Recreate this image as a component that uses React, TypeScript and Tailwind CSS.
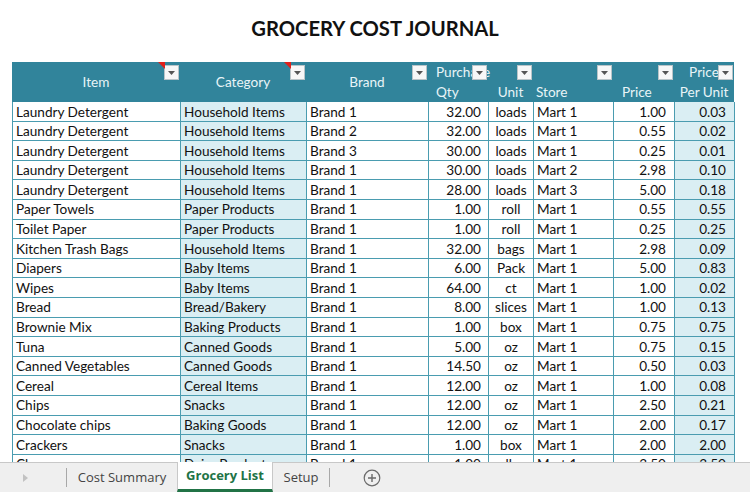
import React from "react";

const rows: string[][] = [
  ["Laundry Detergent", "Household Items", "Brand 1", "32.00", "loads", "Mart 1", "1.00", "0.03"],
  ["Laundry Detergent", "Household Items", "Brand 2", "32.00", "loads", "Mart 1", "0.55", "0.02"],
  ["Laundry Detergent", "Household Items", "Brand 3", "30.00", "loads", "Mart 1", "0.25", "0.01"],
  ["Laundry Detergent", "Household Items", "Brand 1", "30.00", "loads", "Mart 2", "2.98", "0.10"],
  ["Laundry Detergent", "Household Items", "Brand 1", "28.00", "loads", "Mart 3", "5.00", "0.18"],
  ["Paper Towels", "Paper Products", "Brand 1", "1.00", "roll", "Mart 1", "0.55", "0.55"],
  ["Toilet Paper", "Paper Products", "Brand 1", "1.00", "roll", "Mart 1", "0.25", "0.25"],
  ["Kitchen Trash Bags", "Household Items", "Brand 1", "32.00", "bags", "Mart 1", "2.98", "0.09"],
  ["Diapers", "Baby Items", "Brand 1", "6.00", "Pack", "Mart 1", "5.00", "0.83"],
  ["Wipes", "Baby Items", "Brand 1", "64.00", "ct", "Mart 1", "1.00", "0.02"],
  ["Bread", "Bread/Bakery", "Brand 1", "8.00", "slices", "Mart 1", "1.00", "0.13"],
  ["Brownie Mix", "Baking Products", "Brand 1", "1.00", "box", "Mart 1", "0.75", "0.75"],
  ["Tuna", "Canned Goods", "Brand 1", "5.00", "oz", "Mart 1", "0.75", "0.15"],
  ["Canned Vegetables", "Canned Goods", "Brand 1", "14.50", "oz", "Mart 1", "0.50", "0.03"],
  ["Cereal", "Cereal Items", "Brand 1", "12.00", "oz", "Mart 1", "1.00", "0.08"],
  ["Chips", "Snacks", "Brand 1", "12.00", "oz", "Mart 1", "2.50", "0.21"],
  ["Chocolate chips", "Baking Goods", "Brand 1", "12.00", "oz", "Mart 1", "2.00", "0.17"],
  ["Crackers", "Snacks", "Brand 1", "1.00", "box", "Mart 1", "2.00", "2.00"],
  ["Cheese", "Dairy Products", "Brand 1", "1.00", "lb", "Mart 1", "3.50", "3.50"],
];

// per-column cell styling (alignment, padding, shading)
const cellCls = [
  "pl-[3px]",
  "pl-[3px] bg-[#daeef3]",
  "pl-[3px]",
  "justify-end pr-[7px]",
  "justify-center",
  "pl-[3px]",
  "justify-end pr-[8px]",
  "justify-end pr-[8px] bg-[#daeef3]",
];

const cols = "grid grid-cols-[168px_126px_122px_60px_45px_80px_61px_60px]";

function FilterButton({ note }: { note?: boolean }) {
  return (
    <div className="absolute right-[1px] top-[3px] flex items-center">
      {note && (
        <svg width="7" height="7" className="absolute -left-[6px] -top-[3px]">
          <polygon points="0,0 7,0 7,7" fill="#e0201b" />
        </svg>
      )}
      <div className="flex h-[15px] w-[15px] items-center justify-center border border-[#b9c4c8] bg-[#f7f7f7]">
        <svg width="7" height="4">
          <polygon points="0,0 7,0 3.5,4" fill="#555" />
        </svg>
      </div>
    </div>
  );
}

function Header() {
  const top = "relative h-[20px]";
  return (
    <div className={`${cols} h-[40px] bg-[#31849b] text-[13.6px] text-[#e8f4f7]`}>
      <div className="relative flex items-center justify-center">
        Item
        <FilterButton note />
      </div>
      <div className="relative flex items-center justify-center">
        Category
        <FilterButton note />
      </div>
      <div className="relative flex items-center justify-center">
        Brand
        <FilterButton />
      </div>
      <div className="flex flex-col">
        <div className={`${top} overflow-visible whitespace-nowrap pl-[8px] leading-[20px]`}>
          Purchase
          <FilterButton />
        </div>
        <div className="pl-[8px] leading-[20px]">Qty</div>
      </div>
      <div className="flex flex-col">
        <div className={top}>
          <FilterButton />
        </div>
        <div className="text-center leading-[20px]">Unit</div>
      </div>
      <div className="flex flex-col">
        <div className={top}>
          <FilterButton />
        </div>
        <div className="pl-[3px] leading-[20px]">Store</div>
      </div>
      <div className="flex flex-col">
        <div className={top}>
          <FilterButton />
        </div>
        <div className="pl-[9px] leading-[20px]">Price</div>
      </div>
      <div className="flex flex-col">
        <div className={`${top} overflow-hidden text-center leading-[20px]`}>
          Price
          <FilterButton />
        </div>
        <div className="text-center leading-[20px]">Per Unit</div>
      </div>
    </div>
  );
}

function SheetTabs() {
  return (
    <div className="flex h-[30px] shrink-0 items-stretch border-t border-[#c8c8c8] bg-[#efefef] font-['Open_Sans','Liberation_Sans',sans-serif] text-[13px] text-[#444]">
      <div className="flex w-[50px] items-center justify-center">
        <svg width="5" height="8">
          <polygon points="0,0 5,4 0,8" fill="#c2c2c2" />
        </svg>
      </div>
      <div className="my-[5px] ml-[16px] w-px bg-[#a8a8a8]" />
      <div className="flex w-[110px] items-center justify-center">Cost Summary</div>
      <div className="-mt-px flex w-[96px] items-center justify-center border-x border-[#c8c8c8] border-b-[3px] border-b-[#217346] bg-white pt-[1px] font-bold text-[#217346]">
        Grocery List
      </div>
      <div className="flex w-[56px] items-center justify-center">Setup</div>
      <div className="my-[5px] w-px bg-[#a8a8a8]" />
      <div className="flex w-[84px] items-center justify-center">
        <svg width="18" height="18" viewBox="0 0 18 18">
          <circle cx="9" cy="9" r="7.8" fill="none" stroke="#6a6a6a" strokeWidth="1.2" />
          <path d="M9 5v8M5 9h8" stroke="#6a6a6a" strokeWidth="1.4" />
        </svg>
      </div>
    </div>
  );
}

export default function App() {
  return (
    <div className="flex h-[492px] w-[750px] flex-col overflow-hidden bg-white font-['Lato','Liberation_Sans',sans-serif]">
      <div className="flex-1 overflow-hidden">
        <div className="flex h-[62px] items-center justify-center pb-[6px]">
          <h1 className="text-[20.2px] font-bold text-[#111]">GROCERY COST JOURNAL</h1>
        </div>
        <div className="ml-[12px] w-[722px]">
          <Header />
          <div className="border-l border-[#4a9cb0]">
            {rows.map((r, i) => (
              <div key={i} className={`${cols} h-[19.6px] text-[13.6px] text-[#111]`}>
                {r.map((v, j) => (
                  <div
                    key={j}
                    className={`flex items-center overflow-hidden whitespace-nowrap border-b border-r border-[#4a9cb0] pt-[2px] leading-none ${cellCls[j]}`}
                  >
                    {v}
                  </div>
                ))}
              </div>
            ))}
          </div>
        </div>
      </div>
      <SheetTabs />
    </div>
  );
}
